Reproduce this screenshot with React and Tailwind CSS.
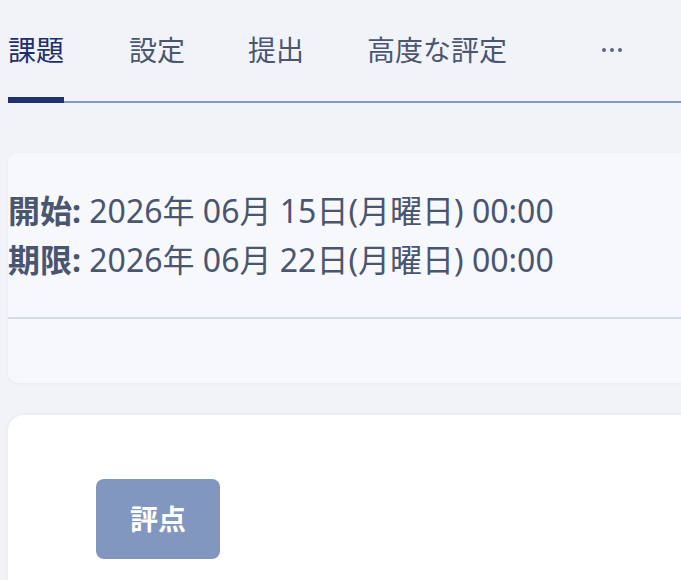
import React from "react";

const tabs = ["課題", "設定", "提出", "高度な評定"];

export default function App() {
  return (
    <div
      className="h-[580px] overflow-hidden bg-[#f2f3f8] text-[#4b5671]"
      style={{ fontFamily: '"Noto Sans", "Noto Sans CJK JP", sans-serif' }}
    >
      <div className="ml-2 -mr-6 flex items-end border-b-2 border-[#8398c2] pt-[29px]">
        {tabs.map((t, i) => (
          <div
            key={t}
            className={
              i === 0
                ? "-mb-[2px] mr-[65px] border-b-[6px] border-[#1e2f72] pb-[26px] text-[28px] leading-[42px] text-[#1e2f72]"
                : "-mb-[2px] mr-[63px] border-b-[6px] border-transparent pb-[26px] text-[28px] leading-[42px]"
            }
          >
            {t}
          </div>
        ))}
        <div className="-mb-[2px] ml-[32px] flex h-[74px] items-start gap-[4px] pt-[19px]">
          <span className="h-[4px] w-[4px] rounded-full bg-[#5b6580]" />
          <span className="h-[4px] w-[4px] rounded-full bg-[#5b6580]" />
          <span className="h-[4px] w-[4px] rounded-full bg-[#5b6580]" />
        </div>
      </div>

      <div className="ml-2 -mr-6 mt-[50px] h-[230px] rounded-[10px] bg-[#f7f8fb] shadow-[0_1px_3px_rgba(30,47,114,0.04)]">
        <div className="pt-[33px] text-[32px] leading-[49px] text-[#4a5570]">
          <div>
            <span className="font-bold">開始:</span> 2026年 06月 15日(月曜日) 00:00
          </div>
          <div>
            <span className="font-bold">期限:</span> 2026年 06月 22日(月曜日) 00:00
          </div>
        </div>
        <div className="mt-[33px] h-[2px] bg-[#d3dbe8]" />
      </div>

      <div className="ml-2 -mr-6 mt-[32px] h-[200px] rounded-[16px] bg-white pl-[88px] pt-[64px] shadow-[0_0_6px_rgba(30,47,114,0.05)]">
        <button className="h-[80px] w-[124px] rounded-[8px] bg-[#8197c0] text-[28px] font-bold leading-[42px] text-white">
          評点
        </button>
      </div>
    </div>
  );
}
